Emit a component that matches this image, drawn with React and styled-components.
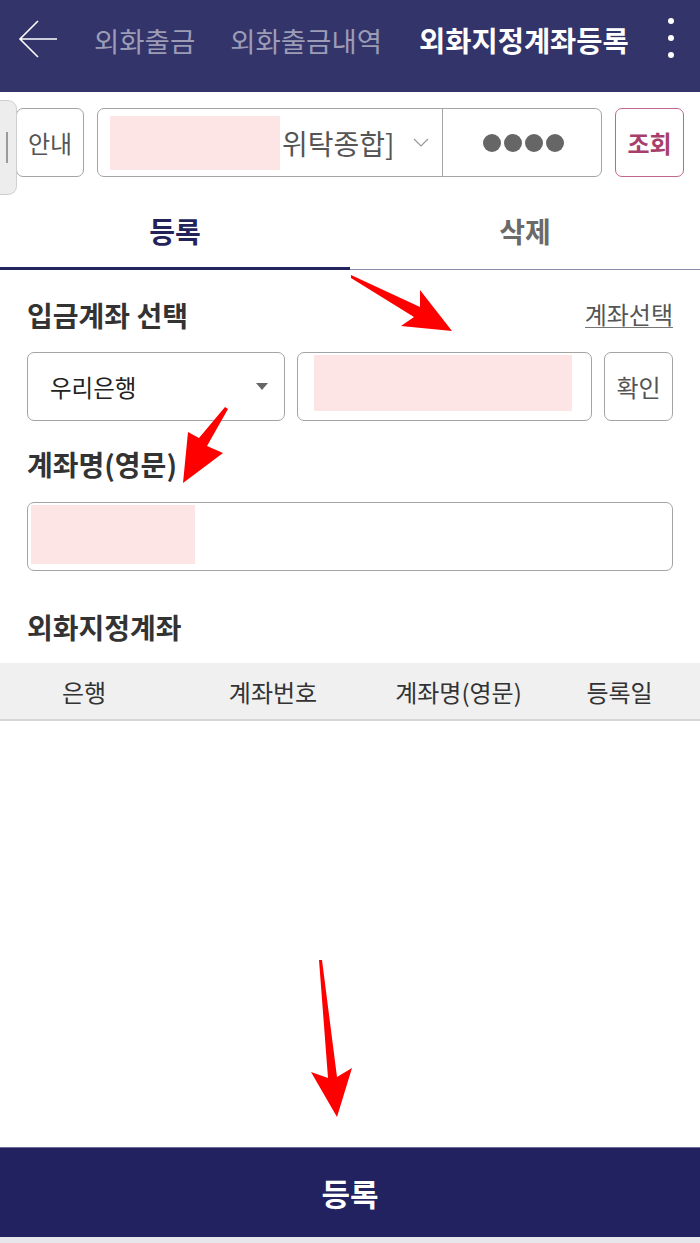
import React from "react";
import styled, { createGlobalStyle } from "styled-components";

const GlobalStyle = createGlobalStyle`
  html, body { margin: 0; padding: 0; background: #fff; }
  body { font-family: "Noto Sans CJK KR", "Noto Sans", sans-serif; }
  * { box-sizing: border-box; }
`;

const Page = styled.div`
  position: relative;
  min-height: 100vh;
  display: flex;
  flex-direction: column;
  background: #fff;
  overflow: hidden;
`;

const Header = styled.header`
  height: 92px;
  background: #33346a;
  display: flex;
  align-items: flex-start;
`;

const HeaderRow = styled.div`
  width: 100%;
  height: 80px;
  display: flex;
  align-items: center;
  padding: 0 26px 0 18px;
`;

const BackIcon = styled.svg`
  width: 40px;
  height: 40px;
  flex: none;
`;

const NavTab = styled.span`
  margin-left: ${(p) => (p.$first ? 36 : p.$active ? 37 : 35)}px;
  font-size: ${(p) => (p.$active ? 28.5 : 27.5)}px;
  font-weight: ${(p) => (p.$active ? 700 : 400)};
  color: ${(p) => (p.$active ? "#ffffff" : "#9c9cb6")};
  line-height: 32px;
  white-space: nowrap;
`;

const Kebab = styled.div`
  margin-left: auto;
  display: flex;
  flex-direction: column;
  gap: 11px;
  margin-bottom: 4px;
`;

const Dot = styled.span`
  width: 6px;
  height: 6px;
  border-radius: 50%;
  background: #fff;
`;

const AccountBar = styled.div`
  display: flex;
  gap: 13px;
  height: 69px;
  margin: 16px 16px 0;
`;

const OutlineButton = styled.button`
  width: ${(p) => p.$w || 68}px;
  flex: none;
  border: 1px solid ${(p) => (p.$accent ? "#c0678f" : "#a4a4a4")};
  border-radius: 7px;
  background: #fff;
  padding: 0;
  font-family: inherit;
  font-size: 24px;
  font-weight: ${(p) => (p.$accent ? 700 : 400)};
  color: ${(p) => (p.$accent ? "#a63f6d" : "#555")};
`;

const AccountSelect = styled.div`
  flex: 1;
  display: flex;
  border: 1px solid #a4a4a4;
  border-radius: 7px;
  overflow: hidden;
`;

const AccountName = styled.div`
  flex: 1;
  display: flex;
  align-items: center;
  padding: 0 13px 0 12px;
`;

const Redacted = styled.div`
  flex: none;
  width: ${(p) => p.$w}px;
  height: ${(p) => p.$h}px;
  margin: ${(p) => p.$m || 0};
  align-self: ${(p) => p.$self || "center"};
  background: #fde5e5;
`;

const AccountType = styled.span`
  margin-left: 2px;
  font-size: 28px;
  color: #555;
  white-space: nowrap;
`;

const Chevron = styled.svg`
  margin-left: auto;
  width: 16px;
  height: 10px;
`;

const PinBox = styled.div`
  width: 159px;
  flex: none;
  border-left: 1px solid #a4a4a4;
  display: flex;
  align-items: center;
  justify-content: center;
  gap: 3px;
  padding-left: 2px;
`;

const PinDot = styled.span`
  width: 18px;
  height: 18px;
  border-radius: 50%;
  background: #666;
`;

const TabBar = styled.div`
  display: flex;
`;

const Tab = styled.div`
  flex: 1;
  text-align: center;
  padding: 39px 0 ${(p) => (p.$active ? 20 : 22)}px;
  font-size: 28px;
  line-height: 31px;
  font-weight: 700;
  color: ${(p) => (p.$active ? "#23235a" : "#6a6a6a")};
  border-bottom: ${(p) => (p.$active ? "3px solid #23235e" : "1px solid #8c8cac")};
`;

const Section = styled.section`
  padding: 0 27px;
`;

const TitleRow = styled.div`
  display: flex;
  justify-content: space-between;
  align-items: center;
  margin-top: ${(p) => p.$mt || 0}px;
`;

const Title = styled.h2`
  margin: 0;
  font-size: 28px;
  line-height: 31px;
  font-weight: 700;
  color: #333;
`;

const LinkText = styled.span`
  font-size: 24px;
  line-height: 27px;
  color: #555;
  border-bottom: 1px solid #777;
  margin-top: -3px;
`;

const FieldRow = styled.div`
  display: flex;
  gap: 12px;
  height: 69px;
  margin-top: ${(p) => p.$mt || 20}px;
`;

const SelectBox = styled.div`
  width: 258px;
  flex: none;
  display: flex;
  align-items: center;
  justify-content: space-between;
  padding: 0 16px 0 22px;
  border: 1px solid #a4a4a4;
  border-radius: 7px;
  font-size: 23.5px;
  color: #222;
`;

const Caret = styled.span`
  width: 0;
  height: 0;
  border-left: 6px solid transparent;
  border-right: 6px solid transparent;
  border-top: 7px solid #666;
`;

const InputBox = styled.div`
  flex: 1;
  display: flex;
  border: 1px solid #a4a4a4;
  border-radius: 7px;
`;

const TableHead = styled.div`
  display: grid;
  grid-template-columns: 24% 30% 23% 23%;
  align-items: center;
  height: 58px;
  margin-top: 20px;
  background: #f0f0f0;
  border-bottom: 2px solid #d6d6d6;
`;

const HeadCell = styled.div`
  text-align: center;
  font-size: 24px;
  color: #333;
`;

const Main = styled.main`
  flex: 1;
`;

const SubmitButton = styled.button`
  display: block;
  width: 100%;
  height: 90px;
  border: none;
  border-top: 1px solid #6c6c96;
  background: #21225f;
  color: #fff;
  font-family: inherit;
  font-size: 31px;
  font-weight: 700;
`;

const BottomStrip = styled.div`
  height: 6px;
  background: #e6e6eb;
`;

const SideHandle = styled.div`
  position: absolute;
  left: 0;
  top: 100px;
  width: 17px;
  height: 95px;
  background: #ededed;
  border: 1px solid #cfcfcf;
  border-left: none;
  border-radius: 0 9px 9px 0;
  display: flex;
  align-items: center;
  padding-left: 6px;
`;

const Grip = styled.span`
  width: 2px;
  height: 31px;
  background: #9a9a9a;
`;

const Annotations = styled.svg`
  position: absolute;
  left: 0;
  top: 0;
  width: 700px;
  height: 1243px;
  pointer-events: none;
`;

export default function App() {
  return (
    <Page>
      <GlobalStyle />
      <Header>
        <HeaderRow>
          <BackIcon viewBox="0 0 40 40" fill="none" stroke="#fff" strokeWidth="1.6">
            <path d="M20 1 L2 19 L20 37 M2 19 H39" />
          </BackIcon>
          <NavTab $first>외화출금</NavTab>
          <NavTab>외화출금내역</NavTab>
          <NavTab $active>외화지정계좌등록</NavTab>
          <Kebab>
            <Dot />
            <Dot />
            <Dot />
          </Kebab>
        </HeaderRow>
      </Header>

      <Main>
        <AccountBar>
          <OutlineButton>안내</OutlineButton>
          <AccountSelect>
            <AccountName>
              <Redacted $w={170} $h={54} />
              <AccountType>위탁종합]</AccountType>
              <Chevron viewBox="0 0 16 10" fill="none" stroke="#999" strokeWidth="1.2">
                <path d="M1 1 L8 8 L15 1" />
              </Chevron>
            </AccountName>
            <PinBox>
              <PinDot />
              <PinDot />
              <PinDot />
              <PinDot />
            </PinBox>
          </AccountSelect>
          <OutlineButton $accent $w={69}>조회</OutlineButton>
        </AccountBar>

        <TabBar>
          <Tab $active>등록</Tab>
          <Tab>삭제</Tab>
        </TabBar>

        <Section>
          <TitleRow $mt={30}>
            <Title>입금계좌 선택</Title>
            <LinkText>계좌선택</LinkText>
          </TitleRow>
          <FieldRow $mt={21}>
            <SelectBox>
              우리은행
              <Caret />
            </SelectBox>
            <InputBox>
              <Redacted $w={258} $h={56} $self="flex-start" $m="2px 0 0 16px" />
            </InputBox>
            <OutlineButton $w={69}>확인</OutlineButton>
          </FieldRow>

          <TitleRow $mt={28}>
            <Title>계좌명(영문)</Title>
          </TitleRow>
          <FieldRow $mt={22}>
            <InputBox>
              <Redacted $w={164} $h={59} $self="flex-start" $m="2px 0 0 3px" />
            </InputBox>
          </FieldRow>

          <TitleRow $mt={41}>
            <Title>외화지정계좌</Title>
          </TitleRow>
        </Section>

        <TableHead>
          <HeadCell>은행</HeadCell>
          <HeadCell>계좌번호</HeadCell>
          <HeadCell>계좌명(영문)</HeadCell>
          <HeadCell>등록일</HeadCell>
        </TableHead>
      </Main>

      <footer>
        <SubmitButton>등록</SubmitButton>
        <BottomStrip />
      </footer>

      <SideHandle>
        <Grip />
      </SideHandle>

      <Annotations viewBox="0 0 700 1243">
        <polygon fill="#ff0000" points="351,275 420,307 420,290 452,331 401,326 414,317 351,278" />
        <polygon fill="#ff0000" points="225,407 228,409 207,446 223,453 183,483 188,432 199,438" />
        <polygon fill="#ff0000" points="319,960 322,960 337,1077 352,1068 337,1117 311,1072 328,1078" />
      </Annotations>
    </Page>
  );
}
